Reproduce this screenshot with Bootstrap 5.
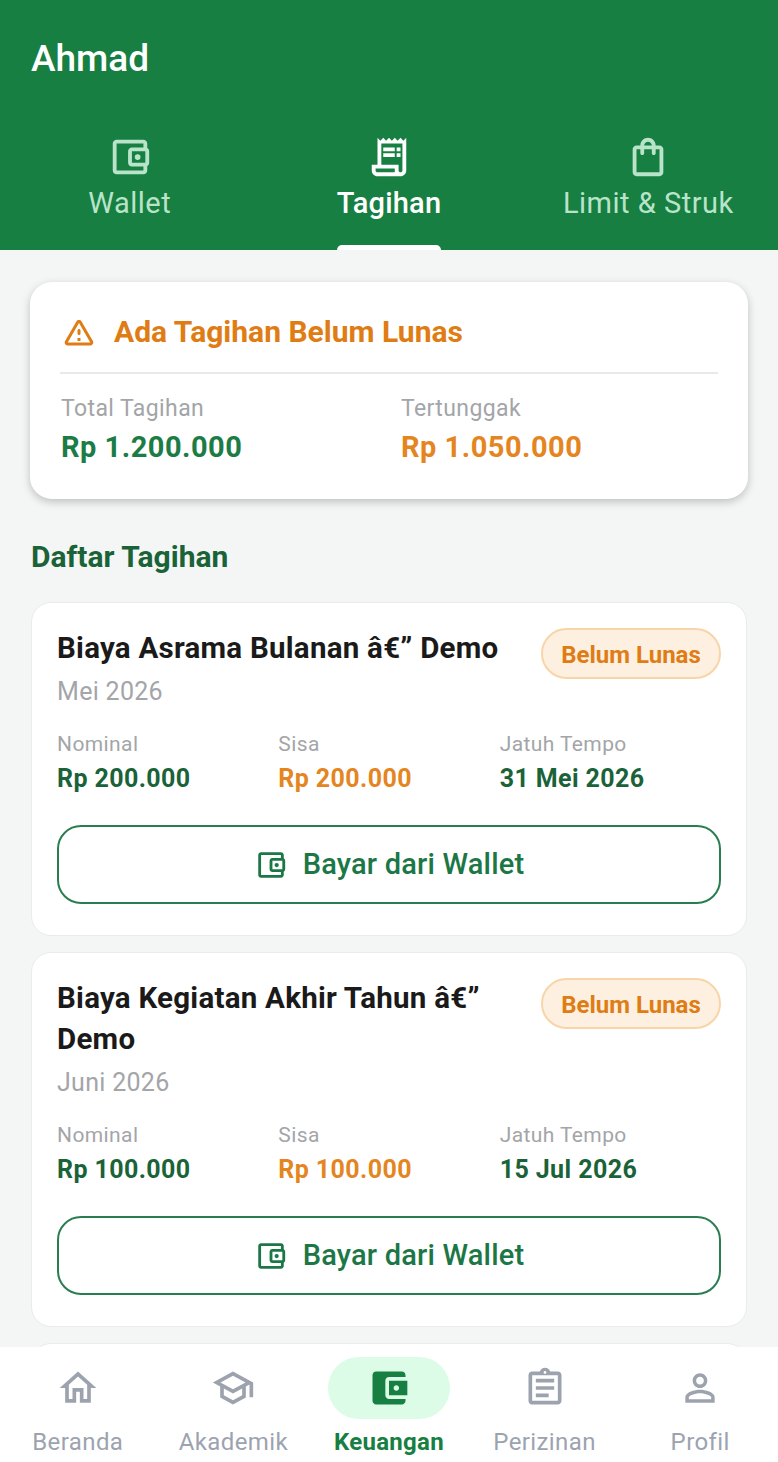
<!DOCTYPE html>
<html lang="en">

<head>
  <meta charset="UTF-8">
  <meta name="viewport" content="width=device-width, initial-scale=1.0">
  <title>Tagihan</title>
  <link href="https://cdn.jsdelivr.net/npm/bootstrap@5.3.0/dist/css/bootstrap.min.css" rel="stylesheet">
  <style>
    html, body { height: 1462px; }
    body { font-family: Roboto, "Liberation Sans", sans-serif; background: #f4f6f5; overflow: hidden; }
    .app-shell { height: 1462px; }

    .top-band { background: #167f41; height: 250px; }
    .user-name { font-size: 37px; font-weight: 500; color: #fff; line-height: 42px; padding: 38px 31px 0; margin: 0; }
    .tab-row { margin-top: 54px; }
    .tab-item { width: 33.333%; color: #b9e4ca; font-size: 29px; line-height: 36px; letter-spacing: .5px; }
    .tab-item svg { width: 46px; height: 46px; display: block; margin-bottom: 5px; fill: currentColor; }
    .tab-item.on { color: #fff; font-weight: 500; letter-spacing: .2px; }
    .tab-label { position: relative; padding-bottom: 29px; }
    .tab-item.on .tab-label::after { content: ""; position: absolute; left: 0; right: 0; bottom: 0; height: 5px; background: #fff; border-radius: 5px 5px 0 0; }

    .scroll-area { overflow: hidden; padding: 32px 30px 0; }
    .summary-box { background: #fff; border-radius: 22px; height: 217px; padding: 30px 30px 0; box-shadow: 0 3px 8px rgba(0, 0, 0, .22); }
    .summary-head { color: #e07c14; font-size: 30px; font-weight: 700; line-height: 40px; padding-bottom: 20px; border-bottom: 2px solid #e8eaea; gap: 17px; }
    .summary-head svg { width: 36px; height: 36px; margin-left: 1px; fill: currentColor; }
    .summary-cols { margin-top: 21px; padding-left: 1px; }
    .summary-cols > div { flex: none; width: 340px; }
    .sum-label { color: #a3a5a8; font-size: 23px; line-height: 28px; letter-spacing: .4px; }
    .sum-value { font-size: 29px; font-weight: 700; line-height: 36px; margin-top: 6px; letter-spacing: .5px; }
    .tone-green { color: #1c7c46; }
    .tone-orange { color: #e5851f; }
    .list-title { color: #1a6238; font-size: 30px; font-weight: 700; line-height: 36px; margin: 40px 0 27px 1px; }

    .bill-box { background: #fff; border: 1px solid #e9ecec; border-radius: 20px; margin: 0 1px 16px; padding: 25px 25px 31px; }
    .bill-top { gap: 20px; }
    .bill-name { color: #1a1a1a; font-size: 29.500px; font-weight: 700; line-height: 41px; letter-spacing: .25px; margin: 0; }
    .bill-month { color: #a3a5a8; font-size: 25px; line-height: 32px; margin-top: 7px; letter-spacing: .3px; }
    .status-pill { flex: none; width: 180px; height: 51px; padding-top: 2px; border: 2px solid #f8d5a8; border-radius: 26px; background: #fdf0e1; color: #e07c14; font-size: 24px; font-weight: 700; }
    .bill-cols { margin-top: 22px; }
    .bill-cols > div { width: 221.500px; }
    .bill-label { color: #a3a5a8; font-size: 21px; line-height: 28px; letter-spacing: .4px; }
    .bill-value { font-size: 25px; font-weight: 700; line-height: 34px; margin-top: 4px; letter-spacing: .4px; }
    .tone-dark { color: #1a6238; }
    .pay-btn { height: 79px; margin-top: 29px; border: 2px solid #2a7d50; border-radius: 24px; color: #1c7746; font-size: 29px; font-weight: 500; background: #fff; gap: 15px; letter-spacing: .2px; }
    .pay-btn:hover { border-color: #2a7d50; color: #1c7746; background: #fff; }
    .pay-btn svg { width: 34px; height: 34px; fill: currentColor; }

    .bottom-bar { height: 115px; background: #fff; position: relative; }
    .bar-item { width: 20%; color: #9ca3af; font-size: 24px; line-height: 30px; letter-spacing: .4px; padding-top: 10px; }
    .bar-icon { width: 122px; height: 62px; border-radius: 31px; }
    .bar-icon svg { width: 44px; height: 44px; fill: currentColor; }
    .bar-item p { margin: 8px 0 0; white-space: nowrap; }
    .bar-item.on { color: #167f41; font-weight: 700; letter-spacing: .3px; }
    .bar-item.on .bar-icon { background: #dcfce7; }
  </style>
</head>

<body>
  <svg width="0" height="0" class="d-none">
    <symbol id="ic-wallet" viewBox="0 0 24 24"><path d="M21 7.280V5c0-1.100-.9-2-2-2H5c-1.110 0-2 .9-2 2v14c0 1.100.89 2 2 2h14c1.100 0 2-.9 2-2v-2.280c.59-.35 1-.98 1-1.720V9c0-.74-.41-1.380-1-1.720zM20 9v6h-7V9h7zM5 19V5h14v2h-6c-1.100 0-2 .9-2 2v6c0 1.100.9 2 2 2h6v2H5z"/><circle cx="16" cy="12" r="1.500"/></symbol>
  </svg>
  <div class="app-shell d-flex flex-column">
    <header class="top-band flex-shrink-0">
      <h1 class="user-name">Ahmad</h1>
      <div class="tab-row d-flex">
        <div class="tab-item d-flex flex-column align-items-center">
          <svg viewBox="0 0 24 24"><use href="#ic-wallet"/></svg>
          <div class="tab-label">Wallet</div>
        </div>
        <div class="tab-item on d-flex flex-column align-items-center">
          <svg viewBox="0 0 24 24"><path d="M19.500 3.500 18 2l-1.500 1.500L15 2l-1.500 1.500L12 2l-1.500 1.500L9 2 7.500 3.500 6 2v14H3v3c0 1.660 1.340 3 3 3h12c1.660 0 3-1.340 3-3V2l-1.500 1.500zM15 20H6c-.55 0-1-.45-1-1v-1h10v2zm4-1c0 .55-.45 1-1 1s-1-.45-1-1v-3H8V5h11v14z"/><path d="M9 7h6v2H9zm7 0h2v2h-2zm-7 3h6v2H9zm7 0h2v2h-2z"/></svg>
          <div class="tab-label">Tagihan</div>
        </div>
        <div class="tab-item d-flex flex-column align-items-center">
          <svg viewBox="0 0 24 24"><path d="M18 6h-2c0-2.210-1.790-4-4-4S8 3.790 8 6H6c-1.100 0-2 .9-2 2v12c0 1.100.9 2 2 2h12c1.100 0 2-.9 2-2V8c0-1.100-.9-2-2-2zm-6-2c1.100 0 2 .9 2 2h-4c0-1.100.9-2 2-2zm6 16H6V8h2v2c0 .55.45 1 1 1s1-.45 1-1V8h4v2c0 .55.45 1 1 1s1-.45 1-1V8h2v12z"/></svg>
          <div class="tab-label">Limit &amp; Struk</div>
        </div>
      </div>
    </header>

    <main class="scroll-area flex-grow-1">
      <section class="summary-box">
        <div class="summary-head d-flex align-items-center">
          <svg viewBox="0 0 24 24"><path d="M12 5.990 19.530 19H4.470L12 5.990M2.740 18c-.77 1.330.19 3 1.730 3h15.060c1.540 0 2.500-1.670 1.730-3L13.730 4.990c-.77-1.330-2.690-1.330-3.460 0L2.740 18zM11 11v2c0 .55.45 1 1 1s1-.45 1-1v-2c0-.55-.45-1-1-1s-1 .45-1 1zm0 5h2v2h-2z"/></svg>
          <span>Ada Tagihan Belum Lunas</span>
        </div>
        <div class="summary-cols d-flex">
          <div>
            <div class="sum-label">Total Tagihan</div>
            <div class="sum-value tone-green">Rp 1.200.000</div>
          </div>
          <div>
            <div class="sum-label">Tertunggak</div>
            <div class="sum-value tone-orange">Rp 1.050.000</div>
          </div>
        </div>
      </section>

      <h2 class="list-title">Daftar Tagihan</h2>

      <article class="bill-box">
        <div class="bill-top d-flex justify-content-between align-items-start">
          <div>
            <h3 class="bill-name">Biaya Asrama Bulanan â€” Demo</h3>
            <div class="bill-month">Mei 2026</div>
          </div>
          <span class="status-pill d-flex align-items-center justify-content-center">Belum Lunas</span>
        </div>
        <div class="bill-cols d-flex">
          <div><div class="bill-label">Nominal</div><div class="bill-value tone-dark">Rp 200.000</div></div>
          <div><div class="bill-label">Sisa</div><div class="bill-value tone-orange">Rp 200.000</div></div>
          <div><div class="bill-label">Jatuh Tempo</div><div class="bill-value tone-dark">31 Mei 2026</div></div>
        </div>
        <button class="btn pay-btn w-100 d-flex align-items-center justify-content-center" type="button">
          <svg viewBox="0 0 24 24"><use href="#ic-wallet"/></svg>
          <span>Bayar dari Wallet</span>
        </button>
      </article>

      <article class="bill-box">
        <div class="bill-top d-flex justify-content-between align-items-start">
          <div>
            <h3 class="bill-name">Biaya Kegiatan Akhir Tahun â€” Demo</h3>
            <div class="bill-month">Juni 2026</div>
          </div>
          <span class="status-pill d-flex align-items-center justify-content-center">Belum Lunas</span>
        </div>
        <div class="bill-cols d-flex">
          <div><div class="bill-label">Nominal</div><div class="bill-value tone-dark">Rp 100.000</div></div>
          <div><div class="bill-label">Sisa</div><div class="bill-value tone-orange">Rp 100.000</div></div>
          <div><div class="bill-label">Jatuh Tempo</div><div class="bill-value tone-dark">15 Jul 2026</div></div>
        </div>
        <button class="btn pay-btn w-100 d-flex align-items-center justify-content-center" type="button">
          <svg viewBox="0 0 24 24"><use href="#ic-wallet"/></svg>
          <span>Bayar dari Wallet</span>
        </button>
      </article>

      <article class="bill-box"></article>
    </main>

    <nav class="bottom-bar d-flex flex-shrink-0">
      <div class="bar-item d-flex flex-column align-items-center">
        <div class="bar-icon d-flex align-items-center justify-content-center">
          <svg viewBox="0 0 24 24"><path d="M12 5.690l5 4.500V18h-2v-6H9v6H7v-7.810l5-4.500M12 3L2 12h3v8h6v-6h2v6h6v-8h3L12 3z"/></svg>
        </div>
        <p>Beranda</p>
      </div>
      <div class="bar-item d-flex flex-column align-items-center">
        <div class="bar-icon d-flex align-items-center justify-content-center">
          <svg viewBox="0 0 24 24"><path d="M12 3L1 9l4 2.180v6L12 21l7-3.820v-6l2-1.090V17h2V9L12 3zm6.820 6L12 12.720 5.180 9 12 5.280 18.820 9zM17 15.990l-5 2.730-5-2.730v-3.720L12 15l5-2.730v3.720z"/></svg>
        </div>
        <p>Akademik</p>
      </div>
      <div class="bar-item on d-flex flex-column align-items-center">
        <div class="bar-icon d-flex align-items-center justify-content-center">
          <svg viewBox="0 0 24 24"><path d="M21 18v1c0 1.100-.9 2-2 2H5c-1.110 0-2-.9-2-2V5c0-1.100.89-2 2-2h14c1.100 0 2 .9 2 2v1h-9c-1.110 0-2 .9-2 2v8c0 1.100.89 2 2 2h9zm-9-2h10V8H12v8zm4-2.500c-.83 0-1.500-.67-1.500-1.500s.67-1.500 1.500-1.500 1.500.67 1.500 1.500-.67 1.500-1.500 1.500z"/></svg>
        </div>
        <p>Keuangan</p>
      </div>
      <div class="bar-item d-flex flex-column align-items-center">
        <div class="bar-icon d-flex align-items-center justify-content-center">
          <svg viewBox="0 0 24 24"><path d="M7 15h7v2H7zm0-4h10v2H7zm0-4h10v2H7zm12-4h-4.180C14.400 1.840 13.300 1 12 1c-1.300 0-2.400.84-2.820 2H5c-.14 0-.27.01-.4.04-.39.08-.74.28-1.010.55-.18.18-.33.4-.43.64-.1.23-.16.49-.16.77v14c0 .27.06.54.16.78s.25.45.43.64c.27.27.62.47 1.010.55.13.02.26.03.4.03h14c1.100 0 2-.9 2-2V5c0-1.100-.9-2-2-2zm-7-.25c.41 0 .75.34.75.75s-.34.75-.75.75-.75-.34-.75-.75.34-.75.75-.75zM19 19H5V5h14v14z"/></svg>
        </div>
        <p>Perizinan</p>
      </div>
      <div class="bar-item d-flex flex-column align-items-center">
        <div class="bar-icon d-flex align-items-center justify-content-center">
          <svg viewBox="0 0 24 24"><path d="M12 5.900c1.160 0 2.100.94 2.100 2.100s-.94 2.100-2.100 2.100S9.900 9.160 9.900 8s.94-2.100 2.100-2.100m0 9c2.970 0 6.100 1.460 6.100 2.100v1.100H5.900V17c0-.64 3.130-2.100 6.100-2.100M12 4C9.790 4 8 5.790 8 8s1.790 4 4 4 4-1.790 4-4-1.790-4-4-4zm0 9c-2.670 0-8 1.340-8 4v3h16v-3c0-2.660-5.330-4-8-4z"/></svg>
        </div>
        <p>Profil</p>
      </div>
    </nav>
  </div>

  <script src="https://cdn.jsdelivr.net/npm/bootstrap@5.3.0/dist/js/bootstrap.bundle.min.js"></script>
</body>

</html>
